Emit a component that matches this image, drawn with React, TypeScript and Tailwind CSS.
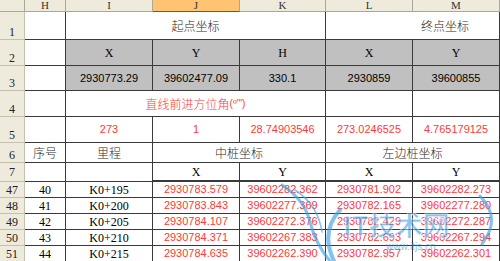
import React from 'react';

const sans = "font-['Liberation_Sans',Arial,sans-serif]";
const serif = "font-['Liberation_Serif','Times_New_Roman',serif]";
const cjk = "font-['Noto_Sans_CJK_SC','Noto_Sans',sans-serif] font-light";

const cell =
  'flex items-center justify-center whitespace-nowrap overflow-hidden border-r border-b border-[#3a3a3a]';
const head =
  'flex items-center justify-center border-r border-b border-[#aca899] text-[11px] leading-none text-[#333]';
const rowHead =
  'flex justify-center border-r border-b border-[#c4c0ad] bg-[#eeebdd] text-[12px] leading-none text-[#222]';
const red = 'text-[#ff3838]';
const gray = 'bg-[#c0c0c0]';
const ink = 'text-[#2a2a2a]';

function C({ className = '', children }: { className?: string; children?: React.ReactNode }) {
  return <div className={`${cell} ${className}`}>{children}</div>;
}

const rows = [
  { n: 47, i: 40, k: 'K0+195', mx: '2930783.579', my: '39602282.362', lx: '2930781.902', ly: '39602282.273' },
  { n: 48, i: 41, k: 'K0+200', mx: '2930783.843', my: '39602277.369', lx: '2930782.165', ly: '39602277.280' },
  { n: 49, i: 42, k: 'K0+205', mx: '2930784.107', my: '39602272.376', lx: '2930782.429', ly: '39602272.287' },
  { n: 50, i: 43, k: 'K0+210', mx: '2930784.371', my: '39602267.383', lx: '2930782.693', ly: '39602267.294' },
  { n: 51, i: 44, k: 'K0+215', mx: '2930784.635', my: '39602262.390', lx: '2930782.957', ly: '39602262.301' },
];

export default function App() {
  return (
    <div className="relative w-[500px] h-[261px] overflow-hidden bg-white text-black">
      <div className="grid grid-cols-[25px_41px_87px_87px_86px_87px_87px] grid-rows-[12px_28px_26px_25px_26px_26px_20px_19px_16px_16px_16px_16px_16px]">
        {/* column letters */}
        <div className={`${head} bg-[#eeebdd]`}></div>
        <div className={`${head} ${serif} bg-[#eeebdd]`}>H</div>
        <div className={`${head} ${serif} bg-[#eeebdd]`}>I</div>
        <div className={`${head} ${serif} bg-[#ffc472] border-b-[#5050b8]`}>J</div>
        <div className={`${head} ${serif} bg-[#eeebdd]`}>K</div>
        <div className={`${head} ${serif} bg-[#eeebdd]`}>L</div>
        <div className={`${head} ${serif} bg-[#eeebdd]`}>M</div>

        {/* row 1 */}
        <div className={`${rowHead} ${serif} items-end pb-[1px]`}>1</div>
        <C />
        <C className={`col-span-3 text-[12px] ${ink} ${cjk}`}>起点坐标</C>
        <C className={`col-span-2 justify-end pr-[30px] text-[12px] ${ink} ${cjk}`}>终点坐标</C>

        {/* row 2 */}
        <div className={`${rowHead} ${serif} items-end pb-[1px]`}>2</div>
        <C />
        <C className={`${gray} text-[12px] ${serif}`}>X</C>
        <C className={`${gray} text-[12px] ${serif}`}>Y</C>
        <C className={`${gray} text-[12px] ${serif}`}>H</C>
        <C className={`${gray} text-[12px] ${serif}`}>X</C>
        <C className={`${gray} text-[12px] ${serif}`}>Y</C>

        {/* row 3 */}
        <div className={`${rowHead} ${serif} items-end pb-[1px]`}>3</div>
        <C />
        <C className={`${gray} text-[11px] ${sans}`}>2930773.29</C>
        <C className={`${gray} text-[11px] ${sans}`}>39602477.09</C>
        <C className={`${gray} text-[11px] ${sans}`}>330.1</C>
        <C className={`${gray} text-[11px] ${sans}`}>2930859</C>
        <C className={`${gray} text-[11px] ${sans}`}>39600855</C>

        {/* row 4 */}
        <div className={`${rowHead} ${serif} items-end pb-[1px]`}>4</div>
        <C />
        <C className={`col-span-3 text-[12px] ${red} ${cjk}`}>
          直线前进方位角<span className={`text-[10px] ${sans}`}>(º'")</span>
        </C>
        <C />
        <C />

        {/* row 5 */}
        <div className={`${rowHead} ${serif} items-end pb-[1px]`}>5</div>
        <C />
        <C className={`text-[11px] ${red} ${sans}`}>273</C>
        <C className={`text-[11px] ${red} ${sans}`}>1</C>
        <C className={`text-[11px] ${red} ${sans}`}>28.74903546</C>
        <C className={`text-[11px] ${red} ${sans}`}>273.0246525</C>
        <C className={`text-[11px] ${red} ${sans}`}>4.765179125</C>

        {/* row 6 */}
        <div className={`${rowHead} ${serif} items-end pb-[1px]`}>6</div>
        <C className={`text-[12px] ${ink} ${cjk}`}>序号</C>
        <C className={`text-[12px] ${ink} ${cjk}`}>里程</C>
        <C className={`col-span-2 text-[12px] ${ink} ${cjk}`}>中桩坐标</C>
        <C className={`col-span-2 text-[12px] ${ink} ${cjk}`}>左边桩坐标</C>

        {/* row 7 */}
        <div className={`${rowHead} ${serif} items-center`}>7</div>
        <C />
        <C />
        <C className={`border-b-2 text-[12px] ${serif}`}>X</C>
        <C className={`border-b-2 text-[12px] ${serif}`}>Y</C>
        <C className={`border-b-2 text-[12px] ${serif}`}>X</C>
        <C className={`border-b-2 text-[12px] ${serif}`}>Y</C>

        {rows.map((r) => (
          <React.Fragment key={r.n}>
            <div className={`${rowHead} ${serif} items-center`}>{r.n}</div>
            <C className={`text-[12px] ${serif}`}>{r.i}</C>
            <C className={`text-[12px] ${serif}`}>{r.k}</C>
            <C className={`text-[11px] ${red} ${sans}`}>{r.mx}</C>
            <C className={`text-[11px] ${red} ${sans}`}>{r.my}</C>
            <C className={`text-[11px] ${red} ${sans}`}>{r.lx}</C>
            <C className={`text-[11px] ${red} ${sans}`}>{r.ly}</C>
          </React.Fragment>
        ))}
      </div>

      {/* watermark */}
      <svg className="pointer-events-none absolute inset-0" width="500" height="261" viewBox="0 0 500 261">
        <g fill="none" stroke="#3fa3e6" strokeLinecap="round" opacity="0.65">
          <path d="M282 185 Q305 200 310 222 Q316 245 330 261" strokeWidth="3" />
          <path d="M295 190 Q318 205 322 232" strokeWidth="1.5" />
          <path d="M340 210 Q320 232 334 261" strokeWidth="4" />
          <path d="M480 196 Q502 218 482 244" strokeWidth="3" />
        </g>
        <text
          x="343"
          y="236"
          fontSize="27"
          fontWeight="bold"
          fill="#3f9fe3"
          stroke="#ffffff"
          strokeWidth="0.8"
          opacity="0.6"
          fontFamily="'Noto Sans CJK SC', 'Noto Sans', sans-serif"
        >
          IT技术网
        </text>
        <text
          x="386"
          y="250"
          fontSize="10"
          fill="#3f9fe3"
          opacity="0.6"
          fontFamily="'Liberation Sans', Arial, sans-serif"
        >
          www.itjs.cn
        </text>
      </svg>
    </div>
  );
}
